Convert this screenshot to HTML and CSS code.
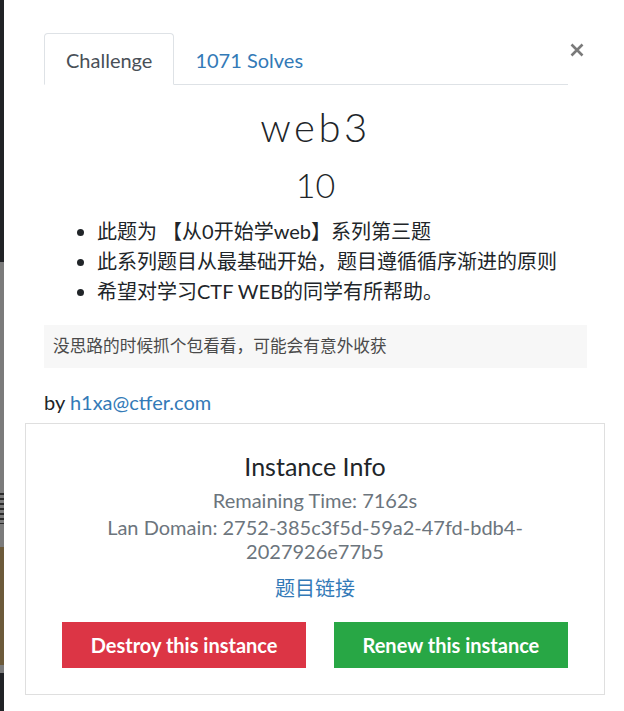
FILE: index.html
```html
<!DOCTYPE html>
<html lang="zh">
<head>
<meta charset="utf-8">
<title>web3</title>
<link rel="stylesheet" href="styles.css">
</head>
<body>
<div class="page">
  <div class="backdrop">
    <div class="bd bd-dark1"></div>
    <div class="bd bd-gray1"></div>
    <div class="bd bd-glyph"></div>
    <div class="bd bd-gray2"></div>
    <div class="bd bd-brown"></div>
    <div class="bd bd-gray3"></div>
    <div class="bd bd-dark2"></div>
  </div>
  <div class="modal">
    <div class="header">
      <ul class="tabs">
        <li class="tab active">Challenge</li>
        <li class="tab link">1071 Solves</li>
      </ul>
      <button class="close" aria-label="Close">
        <svg width="14" height="14" viewBox="0 0 14 14"><path d="M1.5 1.5 L12.5 12.5 M12.5 1.5 L1.5 12.5" stroke="#7a7a7a" stroke-width="2.6" stroke-linecap="butt"/></svg>
      </button>
    </div>
    <h2 class="name">web3</h2>
    <h3 class="value">10</h3>
    <ul class="desc">
      <li>此题为 【从0开始学web】系列第三题</li>
      <li>此系列题目从最基础开始，题目遵循循序渐进的原则</li>
      <li>希望对学习CTF WEB的同学有所帮助。</li>
    </ul>
    <div class="hint">没思路的时候抓个包看看，可能会有意外收获</div>
    <p class="author">by <a class="link" href="#">h1xa@ctfer.com</a></p>
    <div class="instance">
      <h5 class="inst-title">Instance Info</h5>
      <p class="inst-time">Remaining Time: 7162s</p>
      <p class="inst-domain">Lan Domain: 2752-385c3f5d-59a2-47fd-bdb4-<br>2027926e77b5</p>
      <p class="inst-link"><a class="link" href="#">题目链接</a></p>
      <div class="actions">
        <button class="btn btn-red">Destroy this instance</button>
        <button class="btn btn-green">Renew this instance</button>
      </div>
    </div>
  </div>
</div>
</body>
</html>
```
FILE: styles.css
```css
* { box-sizing: border-box; }
html, body { margin: 0; padding: 0; background: #fff; }
body {
  font-family: Lato, "Noto Sans CJK SC", sans-serif;
  font-size: 20px;
  line-height: 1.5;
  color: #212529;
  width: 624px;
  height: 711px;
  overflow: hidden;
}
.page { display: flex; height: 711px; }
.backdrop { width: 4px; display: flex; flex-direction: column; flex: none; }
.bd { width: 4px; }
.bd-dark1 { height: 262px; background: #212326; }
.bd-gray1 { height: 228px; background: #7b7b7b; }
.bd-glyph { height: 34px; background: repeating-linear-gradient(#7b7b7b 0 3px, #2a2a2a 3px 5px); }
.bd-gray2 { height: 23px; background: #7b7b7b; }
.bd-brown { height: 118px; background: #6c5a3a; }
.bd-gray3 { height: 8px; background: #7b7b7b; }
.bd-dark2 { flex: 1; background: #212326; }

.modal { flex: 1; padding: 33px 37px 0 40px; }

.header { display: flex; align-items: flex-start; }
.tabs {
  list-style: none; margin: 0; padding: 0;
  display: flex; width: 524px;
  border-bottom: 1px solid #dee2e6;
}
.tab {
  padding: 11px 21px 9px;
  border: 1px solid transparent;
  border-radius: 4px 4px 0 0;
  margin-bottom: -1px;
  line-height: 30px;
}
.tab.link { padding-left: 20px; }
.tab.active { color: #495057; border-color: #dee2e6 #dee2e6 #fff; background: #fff; }
.link { color: #337ab7; text-decoration: none; }
.close {
  border: 0; background: none; padding: 0; margin: 10px 0 0 2px;
  width: 14px; height: 14px; display: flex; cursor: pointer;
}

.name {
  margin: 18px 0 0; text-align: center;
  font-weight: 300; font-size: 40px; line-height: 48px;
  letter-spacing: 3.5px; color: #212529;
}
.value {
  margin: 14px 0 0; text-align: center;
  font-weight: 300; font-size: 34px; line-height: 40px; color: #212529;
}
.desc { margin: 11px 0 0; padding-left: 53px; line-height: 30px; }
.hint {
  margin-top: 19px;
  background: #f7f7f7;
  padding: 9px 9px;
  font-size: 16.7px; line-height: 25px; color: #4a4a4a;
}
.author { margin: 19px 0 0; line-height: 30px; }

.instance {
  margin: 6px -18px 0 -19px;
  border: 1px solid #dfdfdf;
  padding: 27px 0 26px;
  text-align: center;
}
.inst-title { margin: 0; font-size: 25px; font-weight: 400; line-height: 30px; color: #212529; }
.inst-time { margin: 7px 0 0; line-height: 24px; color: #6c757d; }
.inst-domain { margin: 3px 0 0; line-height: 24px; color: #6c757d; }
.inst-link { margin: 10px 0 0; line-height: 30px; }
.actions { margin-top: 19px; display: flex; justify-content: center; gap: 28px; }
.btn {
  border: 0; border-radius: 0; height: 46px; padding: 0 28.5px;
  font-family: Lato, sans-serif; font-size: 20px; font-weight: 700; color: #fff;
}
.btn-red { background: #dc3545; }
.btn-green { background: #28a745; }
```
